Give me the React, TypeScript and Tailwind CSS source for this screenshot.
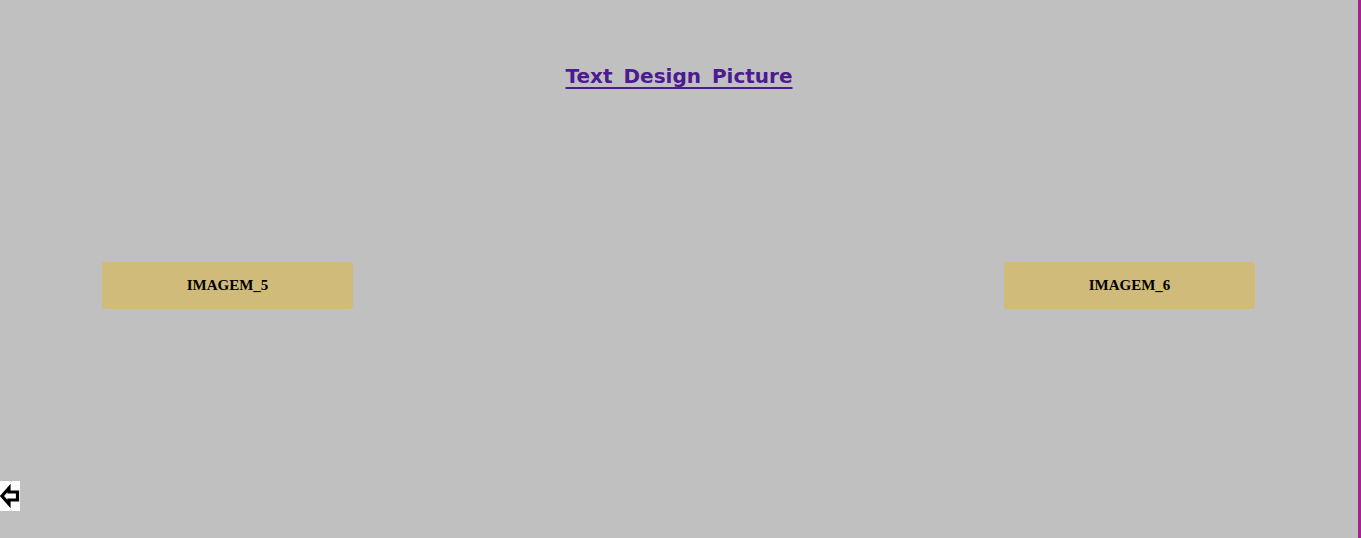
import React from 'react'

function BackArrow() {
  return (
    <svg width="20" height="30" viewBox="0 0 20 30" className="block">
      <rect x="0" y="0" width="20" height="30" fill="#ffffff" />
      <path
        d="M2 15 L9 7 L9 11 L17.5 11 L17.5 19 L9 19 L9 23 Z"
        fill="#ffffff"
        stroke="#000000"
        strokeWidth="3.2"
        strokeLinejoin="miter"
      />
    </svg>
  )
}

function ImageBox({ label }: { label: string }) {
  return (
    <div className="flex h-[47px] w-[251px] items-center justify-center rounded-[3px] bg-[#d0bb7a]">
      <span className="font-['Liberation_Serif',serif] text-[15px] font-bold text-black">{label}</span>
    </div>
  )
}

export default function App() {
  return (
    <div className="flex h-[538px] w-[1361px] overflow-hidden bg-[#c0c0c0]">
      <div className="flex w-[1358px] flex-col">
        <div className="flex justify-center pt-[62px]">
          <a
            href="#"
            className="font-['DejaVu_Sans',sans-serif] text-[20px] font-bold leading-[28px] text-[#4b1b8f] underline decoration-[2px] underline-offset-[4px] [word-spacing:4px]"
          >
            Text Design Picture
          </a>
        </div>
        <div className="mt-[172px] flex justify-between pl-[102px] pr-[103px]">
          <ImageBox label="IMAGEM_5" />
          <ImageBox label="IMAGEM_6" />
        </div>
        <div className="mt-[172px]">
          <BackArrow />
        </div>
      </div>
      <div className="w-[3px] bg-[#a6218d]" />
    </div>
  )
}
